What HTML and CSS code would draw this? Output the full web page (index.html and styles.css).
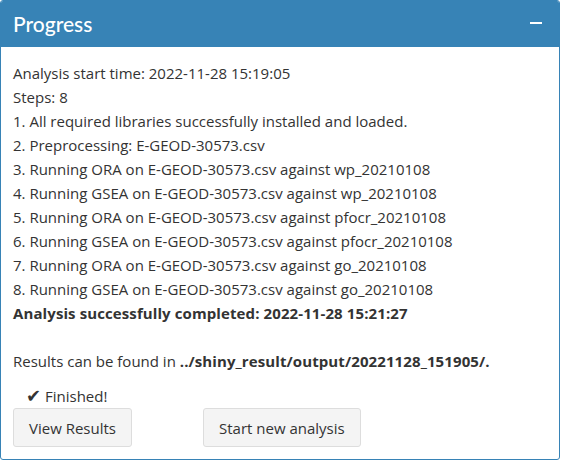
FILE: index.html
```html
<!DOCTYPE html>
<html>
<head>
<meta charset="utf-8">
<link rel="stylesheet" href="styles.css">
</head>
<body>
<div class="box">
  <div class="box-header">
    <h3 class="box-title">Progress</h3>
    <button class="collapse-btn" aria-label="Collapse"><span class="minus"></span></button>
  </div>
  <div class="box-body">
    <div class="log">
      <div>Analysis start time: 2022-11-28 15:19:05</div>
      <div>Steps: 8</div>
      <div>1. All required libraries successfully installed and loaded.</div>
      <div>2. Preprocessing: E-GEOD-30573.csv</div>
      <div>3. Running ORA on E-GEOD-30573.csv against wp_20210108</div>
      <div>4. Running GSEA on E-GEOD-30573.csv against wp_20210108</div>
      <div>5. Running ORA on E-GEOD-30573.csv against pfocr_20210108</div>
      <div>6. Running GSEA on E-GEOD-30573.csv against pfocr_20210108</div>
      <div>7. Running ORA on E-GEOD-30573.csv against go_20210108</div>
      <div>8. Running GSEA on E-GEOD-30573.csv against go_20210108</div>
      <div><b>Analysis successfully completed: 2022-11-28 15:21:27</b></div>
      <div class="blank"></div>
      <div>Results can be found in <b>../shiny_result/output/20221128_151905/.</b></div>
    </div>
    <div class="status"><span class="check">✔</span> Finished!</div>
    <div class="actions">
      <button class="btn">View Results</button>
      <button class="btn">Start new analysis</button>
    </div>
  </div>
</div>
</body>
</html>
```

FILE: styles.css
```css
html, body {
  margin: 0;
  padding: 0;
  background: #ffffff;
}
body {
  font-family: "Open Sans", "Liberation Sans", sans-serif;
  color: #333333;
}
.box {
  box-sizing: border-box;
  width: 560px;
  height: 460px;
  border: 1px solid #3783b6;
  border-radius: 3px;
  overflow: hidden;
  background: #ffffff;
}
.box-header {
  height: 46px;
  background: #3783b6;
  color: #ffffff;
  display: flex;
  align-items: center;
  justify-content: space-between;
  padding: 0 17px 0 12px;
}
.box-title {
  margin: 0;
  font-family: "Lato", sans-serif;
  font-size: 21px;
  font-weight: 500;
  line-height: 1;
  padding-bottom: 2px;
}
.collapse-btn {
  background: transparent;
  border: 0;
  padding: 0;
  width: 12px;
  height: 12px;
  display: flex;
  align-items: center;
  margin-bottom: 3px;
}
.minus {
  display: block;
  width: 12px;
  height: 2px;
  background: #ffffff;
}
.box-body {
  padding: 14px 12px 0 12px;
  font-size: 15px;
  line-height: 24px;
}
.log b {
  letter-spacing: 0.1px;
}
.blank {
  height: 24px;
}
.status {
  margin-top: 11px;
  padding-left: 13px;
  line-height: 24px;
}
.check {
  font-family: "DejaVu Sans", sans-serif;
  font-size: 18px;
  line-height: 1;
}
.actions {
  display: flex;
  gap: 71px;
  margin-top: 0;
}
.btn {
  font-family: inherit;
  font-size: 15px;
  color: #333333;
  background: #f4f4f4;
  border: 1px solid #dddddd;
  border-radius: 3px;
  height: 39px;
  padding: 0 15px;
}
```
